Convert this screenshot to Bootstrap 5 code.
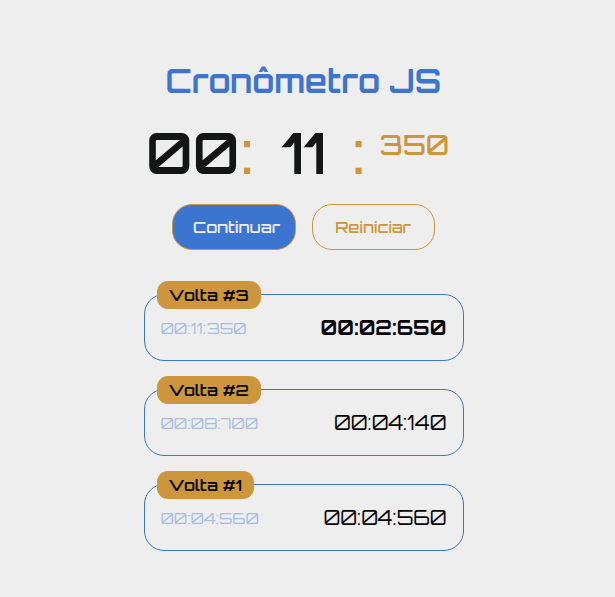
<!DOCTYPE html>
<html lang="pt-BR">
<head>
<meta charset="utf-8">
<meta name="viewport" content="width=device-width, initial-scale=1">
<title>Cronômetro JS</title>
<link href="https://cdn.jsdelivr.net/npm/bootstrap@5.3.0/dist/css/bootstrap.min.css" rel="stylesheet">
<style>
:root { --blue: #3b75d0; --gold: #cd963c; --ink: #141615; }
body { background: #eee; color: #050505; font-family: Orbitron, Inter, sans-serif; overflow: hidden; }
.watch { width: 320px; margin-left: 144px; padding-top: 61px; }
.title { font-size: 32px; line-height: 41px; font-weight: 700; color: var(--blue); margin-left: 21.5px; white-space: nowrap; }
.clock { height: 56px; margin-top: 23px; padding-left: 2px; }
.digits { font-size: 56px; line-height: 56px; font-weight: 600; color: var(--ink); width: 95px; }
.digits.seconds { width: 78px; padding-left: 22.5px; }
.sep { font-size: 56px; line-height: 56px; font-weight: 500; color: var(--gold); width: 18px; }
.sep.wide { margin-left: 15.5px; }
.millis { font-size: 28px; line-height: 38px; font-weight: 500; color: var(--gold); padding: 1px 0 0 9px; }
.actions { margin: 23px 0 0 28px; gap: 16px; }
.btn-watch { width: 124px; height: 46px; border: 1px solid var(--gold); border-radius: 20px; font-size: 16px; line-height: 24px; font-weight: 500; padding: 10px 0; color: var(--gold); }
.btn-watch.running { background: var(--blue); color: #eee; padding-left: 5px; }
.btn-watch.reset { width: 123px; padding-right: 1px; }
.laps { margin-top: 44px; gap: 28px; }
.lap { height: 67px; border: 1px solid var(--blue); border-radius: 20px; padding: 0 16.6px 0 15.5px; }
.lap-name { top: -14px; left: 12px; height: 28px; background: var(--gold); border-radius: 11px; padding: 0 12.4px 0 11.6px; font-size: 16px; line-height: 28px; font-weight: 600; }
.total { font-size: 16px; font-weight: 400; color: var(--blue); opacity: .4; }
.split { font-size: 20px; font-weight: 400; }
.latest .split { font-weight: 700; }
</style>
</head>
<body>
<main class="watch">
  <h1 class="title mb-0">Cronômetro JS</h1>
  <div class="clock d-flex align-items-start">
    <div class="digits">00</div>
    <div class="sep">:</div>
    <div class="digits seconds">11</div>
    <div class="sep wide">:</div>
    <div class="millis">350</div>
  </div>
  <div class="actions d-flex">
    <button class="btn btn-watch running">Continuar</button>
    <button class="btn btn-watch reset">Reiniciar</button>
  </div>
  <section class="laps d-flex flex-column">
    <article class="lap latest position-relative d-flex align-items-center justify-content-between">
      <div class="lap-name position-absolute">Volta #3</div>
      <span class="total">00:11:350</span>
      <span class="split">00:02:650</span>
    </article>
    <article class="lap position-relative d-flex align-items-center justify-content-between">
      <div class="lap-name position-absolute">Volta #2</div>
      <span class="total">00:08:700</span>
      <span class="split">00:04:140</span>
    </article>
    <article class="lap position-relative d-flex align-items-center justify-content-between">
      <div class="lap-name position-absolute">Volta #1</div>
      <span class="total">00:04:560</span>
      <span class="split">00:04:560</span>
    </article>
  </section>
</main>
<script src="https://cdn.jsdelivr.net/npm/bootstrap@5.3.0/dist/js/bootstrap.bundle.min.js"></script>
</body>
</html>
